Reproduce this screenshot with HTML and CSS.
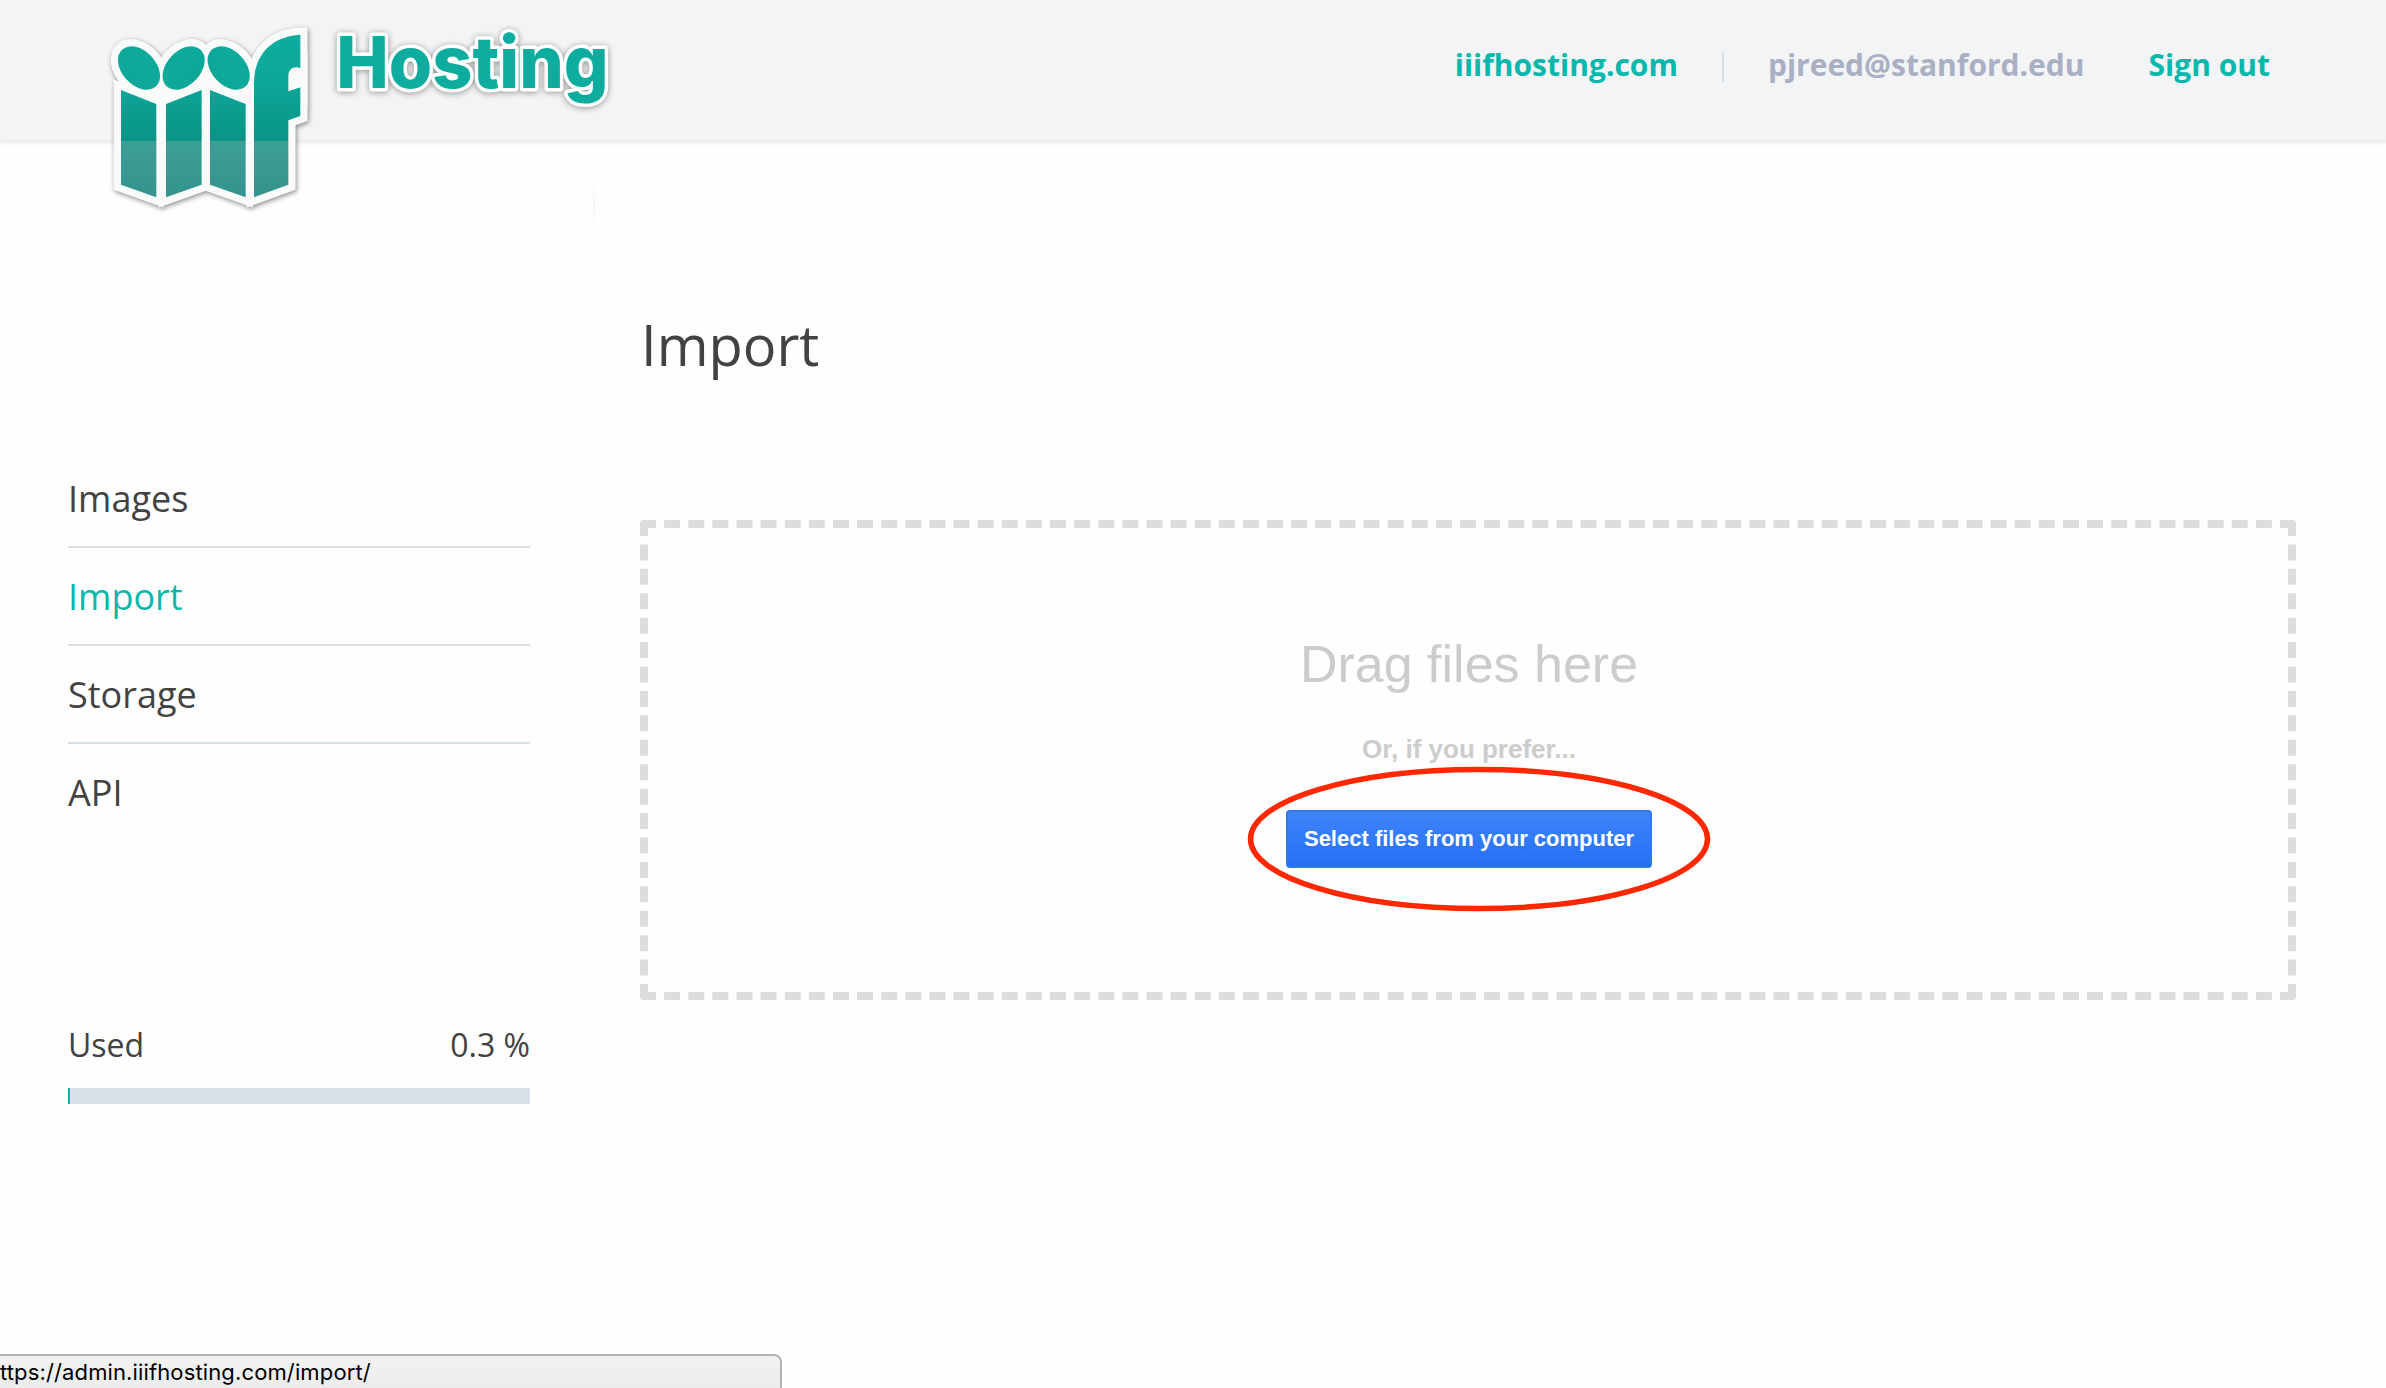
FILE: index.html
```html
<!DOCTYPE html>
<html lang="en">
<head>
<meta charset="utf-8">
<title>Import</title>
<link rel="stylesheet" href="styles.css">
</head>
<body>
<header class="header">
  <svg class="logo" viewBox="-270 0 1830 720" role="img" aria-label="iiif Hosting">
    <defs>
      <linearGradient id="teal" gradientUnits="userSpaceOnUse" x1="0" y1="110" x2="0" y2="600">
        <stop offset="0" stop-color="#0dac9e"/>
        <stop offset=".3" stop-color="#0ea798"/>
        <stop offset=".635" stop-color="#099386"/>
        <stop offset=".64" stop-color="#3c9f96"/>
        <stop offset="1" stop-color="#33938c"/>
      </linearGradient>
      <linearGradient id="fade" x1="0" y1="0" x2="0" y2="1">
        <stop offset="0" stop-color="#f3f3f3" stop-opacity="0"/>
        <stop offset=".5" stop-color="#f3f3f3"/>
        <stop offset="1" stop-color="#f3f3f3" stop-opacity="0"/>
      </linearGradient>
      <g id="mark">
        <ellipse cx="147" cy="204" rx="75" ry="51" transform="rotate(47 147 204)"/>
        <ellipse cx="281" cy="204" rx="75" ry="51" transform="rotate(-47 281 204)"/>
        <ellipse cx="416" cy="204" rx="75" ry="51" transform="rotate(47 416 204)"/>
        <path d="M93 270L199 312V592L93 554Z"/>
        <path d="M335 270L228 312V592L335 554Z"/>
        <path d="M360 270L467 312V592L360 554Z"/>
        <path d="M631 104V204C609 196 595 208 595 228V274L631 262V348L595 361V554L492 592V250C492 160 550 108 631 104Z"/>
      </g>
    </defs>
    <g class="mark-outline">
      <use href="#mark"/>
      <path d="M150 260H335V225H362V260H480V330H150ZM600 180H631V300H600Z"/>
    </g>
    <use href="#mark" fill="url(#teal)"/>
    <text class="wordmark" x="739" y="265" textLength="817" lengthAdjust="spacingAndGlyphs">Hosting</text>
    <rect x="1509" y="535" width="5" height="160" fill="url(#fade)"/>
  </svg>
  <nav class="account">
    <a class="site">iiifhosting.com</a>
    <span class="divider"></span>
    <span class="email">pjreed@stanford.edu</span>
    <a class="signout">Sign out</a>
  </nav>
</header>
<div class="page">
  <aside class="sidebar">
    <ul class="menu">
      <li>Images</li>
      <li class="active">Import</li>
      <li>Storage</li>
      <li>API</li>
    </ul>
    <div class="usage"><span>Used</span><span>0.3 %</span></div>
    <div class="meter"><div class="meter-fill" style="width:0.43%"></div></div>
  </aside>
  <main class="content">
    <h1>Import</h1>
    <section class="dropzone">
      <p class="drag">Drag files here</p>
      <p class="prefer">Or, if you prefer...</p>
      <div class="picker">
        <button class="select">Select files from your computer</button>
        <svg class="ring" viewBox="0 0 464 146"><ellipse cx="232" cy="73" rx="228.5" ry="69.5"/></svg>
      </div>
    </section>
  </main>
</div>
<div class="status"><span>ttps://admin.iiifhosting.com/import/</span></div>
</body>
</html>
```
FILE: styles.css
```css
* { box-sizing: border-box; }
body {
  margin: 0;
  height: 1388px;
  overflow: hidden;
  display: flex;
  flex-direction: column;
  background: #fefefe;
  color: #424242;
  font-family: "Open Sans", sans-serif;
}
.header {
  height: 140px;
  flex: none;
  display: flex;
  justify-content: space-between;
  align-items: flex-start;
  background: #f3f4f6;
  box-shadow: 0 3px 0 #efefef, 0 4px 3px #f2f2f2;
}
.logo { width: 610px; height: 240px; flex: none; overflow: visible; }
.mark-outline {
  fill: #f9fbfb;
  stroke: #f9fbfb;
  stroke-width: 43;
  filter: drop-shadow(3px 5px 8px rgba(0,0,0,.45));
}
.wordmark {
  font: 800 216px Inter, sans-serif;
  fill: #0dac9e;
  stroke: #fff;
  stroke-width: 21px;
  stroke-linejoin: round;
  paint-order: stroke;
  filter: drop-shadow(0 3px 9px rgba(0,0,0,.4));
}
.account {
  display: flex;
  align-items: center;
  margin: 44px 116px 0 0;
  height: 41px;
  font-size: 30px;
  font-weight: 700;
  line-height: 41px;
  color: #aab0c3;
  white-space: nowrap;
}
.account a { color: #05b8ab; }
.divider { width: 2px; height: 30px; margin: 4px 44px 0; background: #d8e0e7; }
.signout { margin-left: 64px; }
.page { display: flex; }
.sidebar { width: 462px; margin: 310px 110px 0 68px; flex: none; }
.menu { list-style: none; margin: 0; padding: 0; font-size: 36px; }
.menu li {
  height: 98px;
  line-height: 98px;
  border-bottom: 2px solid #d8dfe6;
}
.menu li:last-child { border: 0; }
.menu .active { color: #05b8ab; }
.usage {
  display: flex;
  justify-content: space-between;
  margin-top: 181px;
  font-size: 32px;
  line-height: 44px;
}
.meter { height: 16px; margin-top: 21px; background: #d8dfe6; }
.meter-fill { height: 16px; background: #05b8ab; }
.content { width: 1656px; }
h1 { margin: 166px 0 0 1px; font-size: 56px; font-weight: 400; line-height: 76px; }
.dropzone {
  height: 480px;
  margin-top: 138px;
  padding: 106px 0 0 2px;
  border: 8px dashed #ddd;
  clip-path: inset(0 round 4px);
  display: flex;
  flex-direction: column;
  align-items: center;
  font-family: "Liberation Sans", sans-serif;
  color: #ccc;
}
.dropzone p { margin: 0; white-space: nowrap; }
.drag { font-size: 52px; line-height: 60px; }
.dropzone .prefer { margin-top: 40px; font-size: 26px; font-weight: 700; line-height: 30px; }
.picker { position: relative; margin-top: 46px; }
.select {
  display: block;
  width: 366px;
  height: 58px;
  padding: 0;
  border: 2px solid #3079ed;
  border-radius: 4px;
  background: linear-gradient(#3f84f8, #2470f6);
  color: #fff;
  font: 700 22px "Liberation Sans", sans-serif;
  white-space: nowrap;
}
.ring {
  position: absolute;
  left: -39px;
  top: -44px;
  width: 464px;
  height: 146px;
  fill: none;
  stroke: #ff2800;
  stroke-width: 5.5;
}
.status {
  width: 782px;
  height: 34px;
  margin-top: auto;
  border: 2px solid #b3b3b3;
  border-width: 2px 2px 0 0;
  border-radius: 0 8px 0 0;
  background: linear-gradient(#f2f2f2, #ececec);
  color: #000;
  font: 22px/33px Inter, sans-serif;
  letter-spacing: .13px;
}
```
